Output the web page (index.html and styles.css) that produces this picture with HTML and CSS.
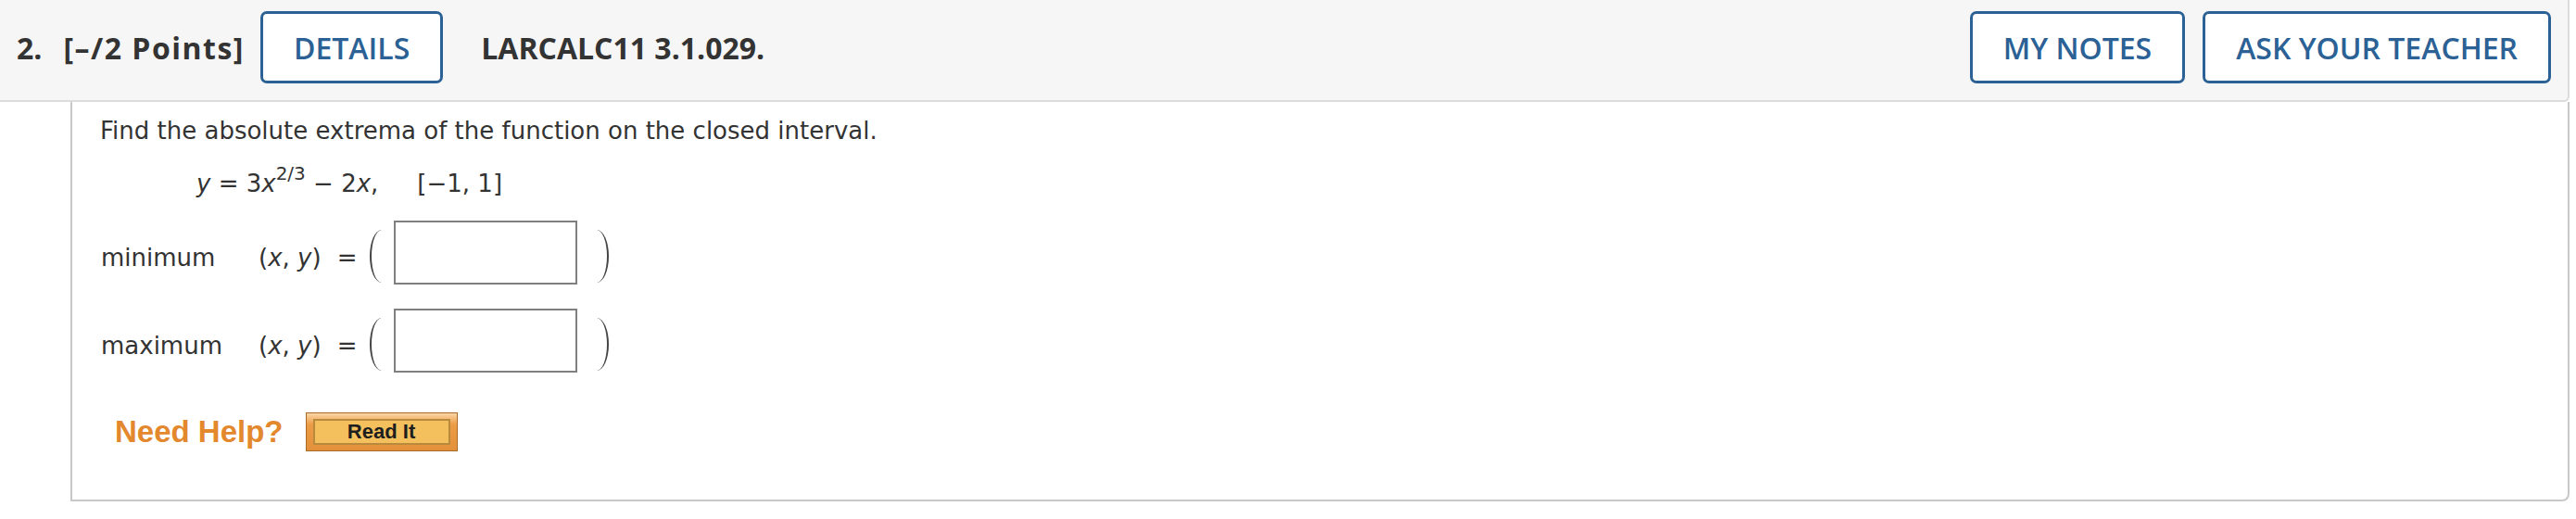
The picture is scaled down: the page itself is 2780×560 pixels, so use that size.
FILE: index.html
```html
<!DOCTYPE html>
<html lang="en">
<head>
    <meta charset="UTF-8">
    <meta name="viewport" content="width=device-width, initial-scale=1.0">
    <title>LARCALC11 3.1.029</title>
    <link rel="stylesheet" href="styles.css">
</head>
<body>
    <div class="question-header">
        <span class="qnum">2.</span>
        <span class="points">[–/2 Points]</span>
        <button class="btn-outline">DETAILS</button>
        <span class="qcode">LARCALC11 3.1.029.</span>
        <div class="header-actions">
            <button class="btn-outline">MY NOTES</button>
            <button class="btn-outline">ASK YOUR TEACHER</button>
        </div>
    </div>

    <div class="question-body">
        <p class="prompt">Find the absolute extrema of the function on the closed interval.</p>
        <p class="equation"><i>y</i> = 3<i>x</i><sup>2/3</sup> − 2<i>x</i>,<span class="interval">[−1, 1]</span></p>

        <div class="answer-row">
            <span class="answer-label">minimum</span>
            <span class="pair">(<i>x</i>, <i>y</i>)</span>
            <span class="equals">=</span>
            <span class="paren paren-left"></span>
            <input type="text" class="answer-box">
            <span class="paren paren-right"></span>
        </div>
        <div class="answer-row">
            <span class="answer-label">maximum</span>
            <span class="pair">(<i>x</i>, <i>y</i>)</span>
            <span class="equals">=</span>
            <span class="paren paren-left"></span>
            <input type="text" class="answer-box">
            <span class="paren paren-right"></span>
        </div>

        <div class="help-row">
            <span class="need-help">Need Help?</span>
            <button class="read-it"><span>Read It</span></button>
        </div>
    </div>
</body>
</html>
```

FILE: styles.css
```css
body {
    margin: 0;
    padding: 0;
    background-color: #fff;
    color: #333;
    font-family: "DejaVu Sans", Verdana, sans-serif;
}
.question-header {
    display: flex;
    align-items: center;
    height: 102px;
    margin-right: 7px;
    padding: 0 18px 6px 18px;
    background-color: #f6f6f6;
    border-bottom: 2px solid #dcdcdc;
    border-right: 2px solid #dcdcdc;
    border-bottom-right-radius: 6px;
    font-family: "Open Sans", sans-serif;
    font-size: 32px;
    color: #333;
}
.qnum {
    font-weight: 700;
    margin-right: 23px;
}
.points {
    font-weight: 700;
    letter-spacing: 1.5px;
    margin-right: 17px;
}
.qcode {
    font-weight: 700;
    margin-left: 41px;
}
.header-actions {
    display: flex;
    gap: 19px;
    margin-left: auto;
}
.btn-outline {
    height: 78px;
    padding: 0 33px;
    border: 3px solid #2b6195;
    border-radius: 7px;
    background-color: #fff;
    color: #2b6195;
    font-family: "Open Sans", sans-serif;
    font-size: 32px;
    font-weight: 600;
    cursor: pointer;
}
.question-body {
    margin: 0 7px 0 76px;
    padding: 12px 30px 52px 30px;
    border: 2px solid #c8c8c8;
    border-top: 0;
    border-bottom-right-radius: 8px;
    font-size: 26px;
}
.prompt {
    margin: 0;
    line-height: 1.5;
}
.equation {
    margin: 18px 0 0 0;
    padding-left: 104px;
    line-height: 1.5;
}
.equation sup {
    font-size: 20px;
    line-height: 0;
    vertical-align: 13px;
}
.interval {
    margin-left: 42px;
}
.answer-row {
    display: flex;
    align-items: center;
    margin-top: 20px;
}
.answer-row + .answer-row {
    margin-top: 26px;
}
.answer-label,
.pair,
.equals {
    padding-top: 11px;
}
.answer-label {
    width: 170px;
    padding-left: 1px;
}
.equals {
    margin-left: 17px;
}
.paren {
    width: 11px;
    height: 57px;
    margin-top: 8px;
}
.paren-left {
    margin-left: 14px;
    margin-right: 13px;
    border-left: 2px solid #444;
    border-radius: 100% 0 0 100% / 50% 0 0 50%;
}
.paren-right {
    margin-left: 21px;
    border-right: 2px solid #444;
    border-radius: 0 100% 100% 0 / 0 50% 50% 0;
}
.answer-box {
    box-sizing: border-box;
    width: 198px;
    height: 69px;
    margin: 0;
    padding: 0 8px;
    border: 2px solid #7f7f7f;
    background-color: #fff;
    font-size: 26px;
}
.help-row {
    display: flex;
    align-items: center;
    margin-top: 43px;
    padding-left: 16px;
}
.need-help {
    margin-right: 24px;
    font-family: "Liberation Sans", Arial, sans-serif;
    font-size: 33px;
    font-weight: 700;
    color: #e3882d;
}
.read-it {
    box-sizing: border-box;
    width: 164px;
    height: 42px;
    padding: 6px 7px;
    border: 1px solid #a86a28;
    background: linear-gradient(#fbd6a6, #ec9c45 30%, #e3903a);
    cursor: pointer;
}
.read-it span {
    display: block;
    box-sizing: border-box;
    height: 100%;
    border: 2px solid #b98a3e;
    background-color: #f3c05d;
    font-family: "Liberation Sans", Arial, sans-serif;
    font-size: 22px;
    font-weight: 700;
    line-height: 24px;
    color: #1e1e1e;
}
```
